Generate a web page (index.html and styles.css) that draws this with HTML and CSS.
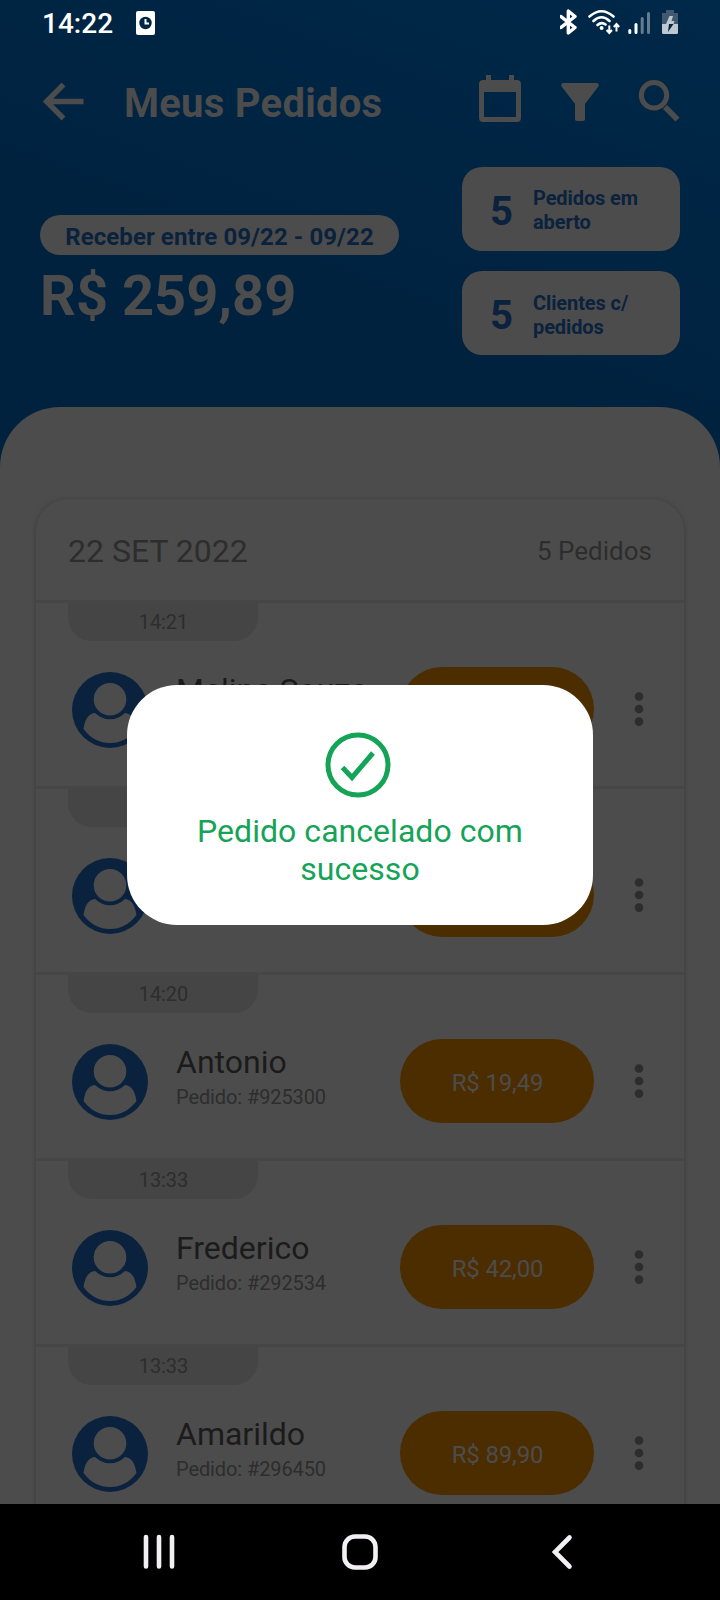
FILE: index.html
```html
<!DOCTYPE html>
<html lang="pt-BR">
<head>
<meta charset="utf-8">
<title>Meus Pedidos</title>
<link rel="stylesheet" href="styles.css">
</head>
<body>
<svg width="0" height="0" class="defs">
  <symbol id="avatar" viewBox="0 0 76 76">
    <circle cx="38" cy="38" r="38" fill="#0a223d"/>
    <circle cx="38" cy="27.3" r="16.3" fill="#4c4c4c"/>
    <path d="M11.500 57C13 48 16 41.500 23 41Q30 47.300 38 47.300Q46 47.300 53 41C60 41.500 63 48 64.500 57Q54 71 38 71Q22 71 11.500 57Z" fill="#4c4c4c"/>
  </symbol>
  <symbol id="dots" viewBox="0 0 10 36">
    <circle cx="5" cy="5.500" r="4.300"/><circle cx="5" cy="18" r="4.300"/><circle cx="5" cy="30.600" r="4.300"/>
  </symbol>
</svg>
<div class="screen">
  <div class="status">
    <span class="clock">14:22</span>
    <svg class="alarm" width="19" height="24" viewBox="0 0 19 24"><rect width="19" height="24" rx="2" fill="#fff"/><circle cx="9.500" cy="12" r="6.200" fill="#002443"/><path d="M9.500 8v4.500h3.500" stroke="#fff" stroke-width="2" fill="none"/></svg>
    <svg class="signals" width="122" height="28" viewBox="0 0 122 28" fill="none">
      <path d="M1 8.500L15 19.500 8.300 25V3L15 8.500 1 19.500" stroke="#fff" stroke-width="3.400" stroke-linejoin="round" stroke-linecap="round"/>
      <g stroke="#fff" stroke-width="2.600" stroke-linecap="round">
        <path d="M29.500 8.500Q41.500 -2 53.500 8.500M33.500 13Q41.500 5.500 49.500 13M37.500 17Q41.500 13.500 45.500 16.500"/>
      </g>
      <circle cx="41.600" cy="20" r="2" fill="#fff"/>
      <path d="M49.300 17.500v7M46.600 22l2.700 3 2.700-3M56.500 23.500v-7M53.800 19l2.700-3 2.700 3" stroke="#fff" stroke-width="2"/>
      <g stroke-width="3" stroke-linecap="round"><path d="M69.800 22.500v2M76 16.500v8" stroke="#fff"/><path d="M82.200 10.500v14M88.500 5.500v19" stroke="#667c8e"/></g>
      <path d="M106 2h8v3h4v11h-16V5h4z" fill="#40596f"/><path d="M102 16h16v8.500q0 1.500-1.500 1.500h-13q-1.500 0-1.500-1.500z" fill="#bfc8d0"/>
      <path d="M109.500 8h3.500l-1.500 5h3l-1 3h-7.500z" fill="#bfc8d0"/><path d="M109 16h4.500l-5.500 8z" fill="#002443"/>
    </svg>
  </div>
  <header class="bar">
    <svg class="back" width="41" height="38" viewBox="0 0 41 38" fill="none" stroke="#4c4c4c" stroke-width="5.400"><path d="M40.500 18.500H5M20.500 1.500L3.500 18.500l17 17"/></svg>
    <h1>Meus Pedidos</h1>
    <svg class="cal" width="42" height="48" viewBox="0 0 42 48" fill="#4c4c4c"><path fill-rule="evenodd" d="M7 0h5v5h18V0h5v5h3q4 0 4 4v34q0 4-4 4H4q-4 0-4-4V9q0-4 4-4h3zM5 17v25h32V17z"/></svg>
    <svg class="filter" width="38" height="38" viewBox="0 0 38 38" fill="#4c4c4c"><path d="M2 0h34q3 1 1 4L24 21v15q0 2-2 2h-6q-2 0-2-2V21L1 4q-2-3 1-4z"/></svg>
    <svg class="search" width="42" height="42" viewBox="0 0 42 42" fill="none" stroke="#4c4c4c"><circle cx="16" cy="15.200" r="12.700" stroke-width="5"/><path d="M27 27L39.500 39.500" stroke-width="5.600"/></svg>
  </header>
  <section class="summary">
    <div class="receive">
      <div class="range">Receber entre 09/22 - 09/22</div>
      <div class="total">R$ 259,89</div>
    </div>
    <div class="stats">
      <div class="stat"><b>5</b><span>Pedidos em<br>aberto</span></div>
      <div class="stat lower"><b>5</b><span>Clientes c/<br>pedidos</span></div>
    </div>
  </section>
  <main class="sheet">
    <div class="group">
      <div class="day"><span class="date">22 SET 2022</span><span class="count">5 Pedidos</span></div>
      <div class="order">
        <div class="time">14:21</div>
        <div class="line"><svg class="avatar"><use href="#avatar"/></svg><div class="who"><div class="name">Melina Souza</div></div><div class="price"></div><svg class="more"><use href="#dots"/></svg></div>
      </div>
      <div class="order">
        <div class="time"></div>
        <div class="line"><svg class="avatar"><use href="#avatar"/></svg><div class="who"></div><div class="price"></div><svg class="more"><use href="#dots"/></svg></div>
      </div>
      <div class="order">
        <div class="time">14:20</div>
        <div class="line"><svg class="avatar"><use href="#avatar"/></svg><div class="who"><div class="name">Antonio</div><div class="id">Pedido: #925300</div></div><div class="price">R$ 19,49</div><svg class="more"><use href="#dots"/></svg></div>
      </div>
      <div class="order">
        <div class="time">13:33</div>
        <div class="line"><svg class="avatar"><use href="#avatar"/></svg><div class="who"><div class="name">Frederico</div><div class="id">Pedido: #292534</div></div><div class="price">R$ 42,00</div><svg class="more"><use href="#dots"/></svg></div>
      </div>
      <div class="order">
        <div class="time">13:33</div>
        <div class="line"><svg class="avatar"><use href="#avatar"/></svg><div class="who"><div class="name">Amarildo</div><div class="id">Pedido: #296450</div></div><div class="price">R$ 89,90</div><svg class="more"><use href="#dots"/></svg></div>
      </div>
    </div>
  </main>
  <nav class="nav">
    <svg width="36" height="40" viewBox="0 0 36 40" stroke="#f2f0f2" stroke-width="4.600" stroke-linecap="round"><path d="M5 5v29.500M18 5v29.500M31 5v29.500"/></svg>
    <svg width="40" height="40" viewBox="0 0 40 40" fill="none" stroke="#f2f0f2" stroke-width="4.600"><rect x="4.500" y="4.500" width="31" height="31" rx="10.500"/></svg>
    <svg width="36" height="40" viewBox="0 0 36 40" fill="none" stroke="#f2f0f2" stroke-width="4.600" stroke-linecap="round"><path d="M26.500 5.500L12 20l14.500 14.500"/></svg>
  </nav>
  <div class="dialog" role="alertdialog">
    <svg class="ok" width="66" height="66" viewBox="0 0 66 66" fill="none" stroke="#14a357" stroke-width="5"><circle cx="33" cy="33" r="30"/><path d="M17.500 35.500L27 45.500 48 21"/></svg>
    <p>Pedido cancelado com sucesso</p>
  </div>
</div>
</body>
</html>
```
FILE: styles.css
```css
* { box-sizing: border-box; }
body { margin: 0; font-family: Roboto, "Liberation Sans", sans-serif; background: #000; }
.defs { position: absolute; }
.screen { position: relative; width: 720px; height: 1600px; overflow: hidden; display: flex; flex-direction: column; background: linear-gradient(200deg, #002848 0, #00223f 430px, #00223f 100%); }
svg { display: block; flex: none; }
.status { height: 46px; flex: none; display: flex; align-items: center; padding: 0 38px 0 42px; color: #fff; }
.clock { font-size: 28px; font-weight: 500; line-height: 32px; width: 94px; padding-top: 1px; }
.signals { margin-left: auto; margin-top: -2px; }
.bar { height: 108px; flex: none; display: flex; align-items: flex-start; padding: 0 40px 0 43px; color: #4c4c4c; }
.back { margin-top: 37px; }
h1 { margin: 34px 0 0 40px; font-size: 40px; line-height: 48px; font-weight: 700; width: 355px; letter-spacing: 0.25px; white-space: nowrap; }
.cal { margin-top: 29px; }
.filter { margin: 37px 0 0 40px; }
.search { margin: 34px 0 0 auto; }
.summary { height: 253px; flex: none; padding: 13px 40px 0; display: flex; justify-content: space-between; }
.receive { padding-top: 48px; }
.range { width: 359px; height: 40px; border-radius: 20px; background: #4c4c4c; color: #0a223d; font-size: 24px; line-height: 44px; font-weight: 700; letter-spacing: 0.08px; text-align: center; white-space: nowrap; }
.total { font-size: 56px; line-height: 66px; font-weight: 700; color: #4c4c4c; margin-top: 8px; }
.stats { display: flex; flex-direction: column; gap: 20px; }
.stat { width: 218px; height: 84px; border-radius: 20px; background: #4c4c4c; color: #0a223d; display: flex; align-items: center; padding-left: 28px; }
.stat b { font-size: 40px; line-height: 47px; width: 43px; padding-top: 4px; }
.stat span { font-size: 20px; line-height: 24px; font-weight: 700; padding-top: 2px; letter-spacing: -0.1px; }
.stat.lower span { padding-top: 4px; }
.sheet { flex: 1; min-height: 0; overflow: hidden; background: #4c4c4c; border-radius: 60px 60px 0 0; padding: 92px 36px 0; }
.group { height: 1200px; border-radius: 32px 32px 0 0; box-shadow: 0 1px 4px 1px #404040; background: #4c4c4c; }
.day { height: 104px; border-bottom: 3px solid #464646; padding: 3px 32px 0; display: flex; justify-content: space-between; align-items: center; color: #2d2d2d; }
.date { font-size: 32px; line-height: 38px; }
.count { font-size: 26px; line-height: 32px; }
.order { height: 186px; border-bottom: 3px solid #464646; padding: 0 32px; }
.time { width: 190px; height: 38px; background: #454545; border-radius: 0 0 24px 24px; font-size: 20px; line-height: 38px; text-align: center; color: #2d2d2d; letter-spacing: -0.1px; padding-left: 1px; }
.line { display: flex; padding: 26px 8px 0 4px; align-items: flex-start; }
.avatar { width: 76px; height: 76px; margin-top: 5px; }
.who { width: 224px; margin-left: 28px; padding-top: 4px; }
.name { font-size: 32px; line-height: 38px; color: #1b1b1b; white-space: nowrap; }
.id { font-size: 20px; line-height: 24px; margin-top: 4px; color: #2d2d2d; letter-spacing: -0.1px; }
.price { width: 194px; height: 84px; border-radius: 42px; background: #4c2d00; color: #4c4c4c; font-size: 24px; line-height: 88px; letter-spacing: -0.15px; padding-left: 1px; text-align: center; }
.more { width: 10px; height: 36px; margin: 24px 0 0 40px; fill: #2d2d2d; }
.nav { height: 96px; flex: none; background: #000; display: flex; justify-content: space-between; align-items: center; padding: 0 141px; }
.dialog { position: absolute; left: 127px; top: 685px; width: 466px; height: 240px; border-radius: 50px; background: #fff; color: #14a357; padding: 47px 60px 0; display: flex; flex-direction: column; align-items: center; }
.ok { margin-right: 5px; }
.dialog p { margin: 14px 0 0; font-size: 32px; line-height: 38px; text-align: center; letter-spacing: 0.04px; }
```
